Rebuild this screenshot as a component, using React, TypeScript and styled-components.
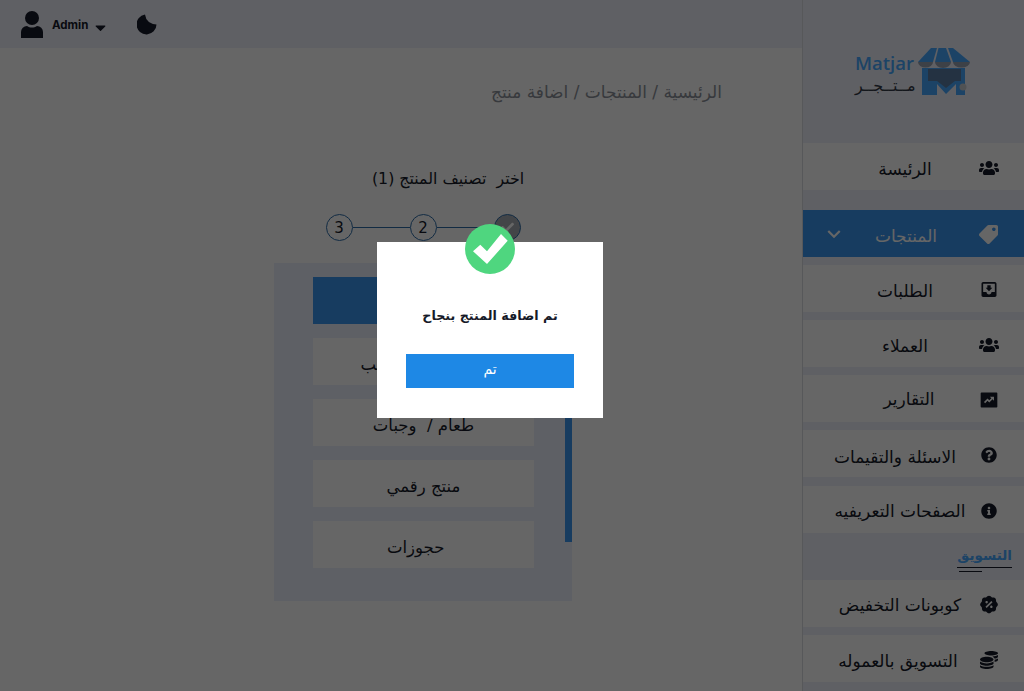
import React from "react";
import styled, { createGlobalStyle } from "styled-components";
import {
  FaCaretDown,
  FaCheck,
  FaCoins,
  FaInfoCircle,
  FaQuestionCircle,
  FaTag,
  FaUsers,
} from "react-icons/fa";
import { MdKeyboardArrowDown, MdMoveToInbox } from "react-icons/md";
import { RiDiscountPercentFill, RiFundsBoxFill } from "react-icons/ri";

const FONT = `"DejaVu Sans", sans-serif`;
const BLUE = "#3a96f0";
const LOGO_BLUE = "#46a8ff";
const BUTTON_BLUE = "#1e88e5";

const GlobalStyle = createGlobalStyle`
  html, body {
    margin: 0;
    padding: 0;
    height: 100%;
    overflow: hidden;
    font-family: ${FONT};
  }
`;

const Page = styled.div`
  display: flex;
  width: 1024px;
  height: 691px;
  overflow: hidden;
  background: #ffffff;
  color: #161a28;
`;

const Main = styled.main`
  flex: 1;
  display: flex;
  flex-direction: column;
  min-width: 0;
`;

const TopBar = styled.header`
  height: 48px;
  flex-shrink: 0;
  display: flex;
  align-items: center;
  padding-left: 21px;
  background: #eef0fa;
`;

const UserBox = styled.div`
  display: flex;
  align-items: center;
  font-family: "Inter", sans-serif;
  font-size: 11.5px;
  font-weight: 700;
`;

const UserName = styled.span`
  margin: 1px 4px 0 9px;
`;

const CaretBox = styled.span`
  display: flex;
  margin-top: 6px;
`;

const ThemeToggle = styled.div`
  display: flex;
  margin: 2px 0 0 28px;
`;

const Content = styled.div`
  flex: 1;
  display: flex;
  flex-direction: column;
  align-items: center;
  direction: rtl;
  padding-left: 44px;
`;

const Breadcrumb = styled.div`
  align-self: flex-start;
  margin: 31px 80px 0 0;
  font-size: 17px;
  line-height: 26px;
  color: #8b9098;
  white-space: nowrap;
`;

const StepTitle = styled.h2`
  margin: 62px 0 0 50px;
  font-size: 15.8px;
  line-height: 24px;
  font-weight: 400;
  white-space: pre;
`;

const Stepper = styled.div`
  display: flex;
  align-items: center;
  margin-top: 23px;
`;

const StepDot = styled.div`
  width: 25px;
  height: 25px;
  border: 1px solid #2e6da8;
  border-radius: 50%;
  display: flex;
  align-items: center;
  justify-content: center;
  font-size: 15px;
  color: #ffffff;
  background: #a9adb3;
`;

const StepNumber = styled(StepDot)`
  color: #161a28;
  background: transparent;
`;

const StepLine = styled.div`
  width: 57px;
  height: 1px;
  background: #2e6da8;
`;

const CategoryPanel = styled.div`
  position: relative;
  width: 298px;
  height: 338px;
  margin-top: 22px;
  box-sizing: border-box;
  padding: 14px 38px 0 39px;
  display: flex;
  flex-direction: column;
  gap: 14px;
  background: #ebf0fc;
`;

const CategoryItem = styled.div`
  height: 47px;
  flex-shrink: 0;
  display: flex;
  align-items: center;
  justify-content: center;
  padding-top: 6px;
  box-sizing: border-box;
  font-size: 16.5px;
  white-space: pre;
  background: ${({ $active }: { $active?: boolean }) => ($active ? BLUE : "#ffffff")};
  color: ${({ $active }: { $active?: boolean }) => ($active ? "#ffffff" : "#161a28")};
`;

const ScrollThumb = styled.div`
  position: absolute;
  left: 291px;
  top: 110px;
  width: 7px;
  height: 169px;
  background: ${BLUE};
`;

const Sidebar = styled.aside`
  width: 221px;
  flex-shrink: 0;
  display: flex;
  flex-direction: column;
  direction: rtl;
  border-left: 1px solid #d9dbe0;
  background: #eef0fa;
`;

const LogoBox = styled.div`
  height: 143px;
  flex-shrink: 0;
  display: flex;
  justify-content: flex-start;
  padding: 48px 0 0 52px;
  box-sizing: border-box;
  direction: ltr;
`;

const LogoWords = styled.div`
  display: flex;
  flex-direction: column;
  align-items: stretch;
  width: 58px;
  margin-right: 5px;
  margin-top: 3px;
`;

const LogoLatin = styled.span`
  font-family: "Open Sans", sans-serif;
  font-size: 18.5px;
  line-height: 24px;
  font-weight: 600;
  color: ${LOGO_BLUE};
  white-space: nowrap;
`;

const LogoArabic = styled.span`
  font-size: 16px;
  line-height: 22px;
  color: #333a48;
  text-align: center;
  white-space: nowrap;
`;

const NavRow = styled.div`
  height: 47px;
  flex-shrink: 0;
  display: flex;
  align-items: center;
  margin-bottom: ${({ $gap }: { $gap: number }) => $gap}px;
  padding: 0 25px 0 0;
  background: #ffffff;
  font-size: 17px;
`;

const ActiveRow = styled(NavRow)`
  background: ${BLUE};
  color: #ffffff;
`;

const NavIcon = styled.span`
  width: 20px;
  flex-shrink: 0;
  display: flex;
  justify-content: center;
  margin-top: 2px;
  color: #161a28;
`;

const TagIcon = styled(NavIcon)`
  color: #ffffff;
  transform: scaleX(-1);
`;

const NavLabel = styled.span`
  flex: 1;
  text-align: center;
  white-space: nowrap;
  padding: ${({ $top = 4 }: { $pad: number; $top?: number }) => $top}px 0 0
    ${({ $pad }: { $pad: number; $top?: number }) => $pad}px;
`;

const Chevron = styled.span`
  display: flex;
  position: absolute;
  left: 821px;
  font-size: 26px;
  color: #ffffff;
`;

const SectionHead = styled.div`
  height: 47px;
  flex-shrink: 0;
  display: flex;
  padding: 12px 12px 0 0;
  box-sizing: border-box;
`;

const SectionLabel = styled.span`
  position: relative;
  height: 22px;
  font-size: 13.5px;
  line-height: 20px;
  font-weight: 700;
  color: ${LOGO_BLUE};
  border-bottom: 1px solid #161a28;

  &::after {
    content: "";
    position: absolute;
    left: 2px;
    bottom: -5px;
    width: 23px;
    height: 1px;
    background: #161a28;
  }
`;

const Overlay = styled.div`
  position: fixed;
  inset: 0;
  background: rgba(0, 0, 0, 0.6);
`;

const Dialog = styled.div`
  position: absolute;
  left: 377px;
  top: 242px;
  width: 226px;
  height: 176px;
  box-sizing: border-box;
  padding: 61px 29px 0;
  background: #ffffff;
  direction: rtl;
  text-align: center;
`;

const SuccessBadge = styled.div`
  position: absolute;
  left: 88px;
  top: -18px;
  width: 50px;
  height: 50px;
  border-radius: 50%;
  display: flex;
  align-items: center;
  justify-content: center;
  background: #4fd67f;
`;

const DialogText = styled.div`
  font-size: 12.7px;
  line-height: 26px;
  font-weight: 700;
  color: #161a28;
`;

const DialogButton = styled.button`
  display: block;
  width: 168px;
  height: 34px;
  margin-top: 25px;
  padding: 0 0 4px;
  border: 0;
  background: ${BUTTON_BLUE};
  color: #ffffff;
  font-family: ${FONT};
  font-size: 14px;
`;

const LogoMark = () => (
  <svg width="52" height="48" viewBox="0 0 52 48" aria-hidden="true">
    <path d="M13 0h6l-4 14H0Z" fill={LOGO_BLUE} />
    <path d="M20.500 0H28l5 14H17Z" fill={LOGO_BLUE} />
    <path d="M30 0h5l17 14H35Z" fill={LOGO_BLUE} />
    <path d="M0 14h15a7.500 5.500 0 0 1-15 0ZM17 14h16a8 6 0 0 1-16 0ZM35 14h17a8.500 5.500 0 0 1-17 0Z" fill="#98a2b2" />
    <path d="M4 20h43v27h-9V36L28 46l-9-10v11H4Z" fill={LOGO_BLUE} />
    <path d="M10 21h33v12H37l-9 7-9-7h-9Z" fill="#5b7ea6" />
    <circle cx="45" cy="39" r="3.500" fill="#c9cdd2" />
  </svg>
);

const UserGlyph = () => (
  <svg width="22" height="27" viewBox="0 0 22 27" aria-hidden="true">
    <circle cx="11" cy="7" r="7" fill="#161a28" />
    <path d="M0 21a6 6 0 0 1 6-6c2 1 3 1.500 5 1.500s3-.5 5-1.500a6 6 0 0 1 6 6v6H0Z" fill="#161a28" />
  </svg>
);

const MoonGlyph = () => (
  <svg width="20" height="22" viewBox="0 0 20 22" aria-hidden="true">
    <path d="M8 .5Q9.200 9.500 19.500 10.500A10 10 0 1 1 8 .5Z" fill="#161a28" />
  </svg>
);

const BadgeCheck = () => (
  <svg width="35" height="30" viewBox="0 0 35 30" aria-hidden="true">
    <path d="M0 17.300 7.300 10.700 14 17.300 28 0l6.700 6.700L14 30Z" fill="#ffffff" />
  </svg>
);

const NAV_TOP = [
  { label: "الطلبات", icon: <MdMoveToInbox size={23} />, pad: 28 },
  { label: "العملاء", icon: <FaUsers size={20} />, pad: 28 },
  { label: "التقارير", icon: <RiFundsBoxFill size={24} />, pad: 36, top: 0 },
];

const NAV_INFO = [
  { label: "الاسئلة والتقيمات", icon: <FaQuestionCircle size={16} />, pad: 8, top: 7 },
  { label: "الصفحات التعريفيه", icon: <FaInfoCircle size={16} />, pad: 18, top: 3 },
];

const NAV_MARKETING = [
  { label: "كوبونات التخفيض", icon: <RiDiscountPercentFill size={21} />, pad: 18, top: 2 },
  { label: "التسويق بالعموله", icon: <FaCoins size={18} />, pad: 14 },
];

const CATEGORIES = ["منتج جاهز", "منتج حسب الطلب", "طعام /  وجبات", "منتج رقمي", "   حجوزات"];

export default function App() {
  return (
    <>
      <GlobalStyle />
      <Page>
        <Main>
          <TopBar>
            <UserBox>
              <UserGlyph />
              <UserName>Admin</UserName>
              <CaretBox>
                <FaCaretDown size={17} />
              </CaretBox>
            </UserBox>
            <ThemeToggle>
              <MoonGlyph />
            </ThemeToggle>
          </TopBar>
          <Content>
            <Breadcrumb>الرئيسية / المنتجات / اضافة منتج</Breadcrumb>
            <StepTitle>اختر  تصنيف المنتج (1)</StepTitle>
            <Stepper>
              <StepDot>
                <FaCheck size={13} />
              </StepDot>
              <StepLine />
              <StepNumber>2</StepNumber>
              <StepLine />
              <StepNumber>3</StepNumber>
            </Stepper>
            <CategoryPanel>
              {CATEGORIES.map((name, i) => (
                <CategoryItem key={name} $active={i === 0}>
                  {name}
                </CategoryItem>
              ))}
              <ScrollThumb />
            </CategoryPanel>
          </Content>
        </Main>
        <Sidebar>
          <LogoBox>
            <LogoWords>
              <LogoLatin>Matjar</LogoLatin>
              <LogoArabic>مــتــجــر</LogoArabic>
            </LogoWords>
            <LogoMark />
          </LogoBox>
          <NavRow $gap={20}>
            <NavIcon>
              <FaUsers size={20} />
            </NavIcon>
            <NavLabel $pad={28}>الرئيسة</NavLabel>
          </NavRow>
          <ActiveRow $gap={8}>
            <TagIcon>
              <FaTag size={19} />
            </TagIcon>
            <NavLabel $pad={30} $top={5}>المنتجات</NavLabel>
            <Chevron>
              <MdKeyboardArrowDown />
            </Chevron>
          </ActiveRow>
          {NAV_TOP.map((item) => (
            <NavRow key={item.label} $gap={8}>
              <NavIcon>{item.icon}</NavIcon>
              <NavLabel $pad={item.pad} $top={item.top}>{item.label}</NavLabel>
            </NavRow>
          ))}
          {NAV_INFO.map((item, i) => (
            <NavRow key={item.label} $gap={i === 0 ? 9 : 0}>
              <NavIcon>{item.icon}</NavIcon>
              <NavLabel $pad={item.pad} $top={item.top}>{item.label}</NavLabel>
            </NavRow>
          ))}
          <SectionHead>
            <SectionLabel>التسويق</SectionLabel>
          </SectionHead>
          {NAV_MARKETING.map((item) => (
            <NavRow key={item.label} $gap={8}>
              <NavIcon>{item.icon}</NavIcon>
              <NavLabel $pad={item.pad} $top={item.top}>{item.label}</NavLabel>
            </NavRow>
          ))}
        </Sidebar>
        <Overlay />
        <Dialog>
          <SuccessBadge>
            <BadgeCheck />
          </SuccessBadge>
          <DialogText>تم اضافة المنتج بنجاح</DialogText>
          <DialogButton>تم</DialogButton>
        </Dialog>
      </Page>
    </>
  );
}
